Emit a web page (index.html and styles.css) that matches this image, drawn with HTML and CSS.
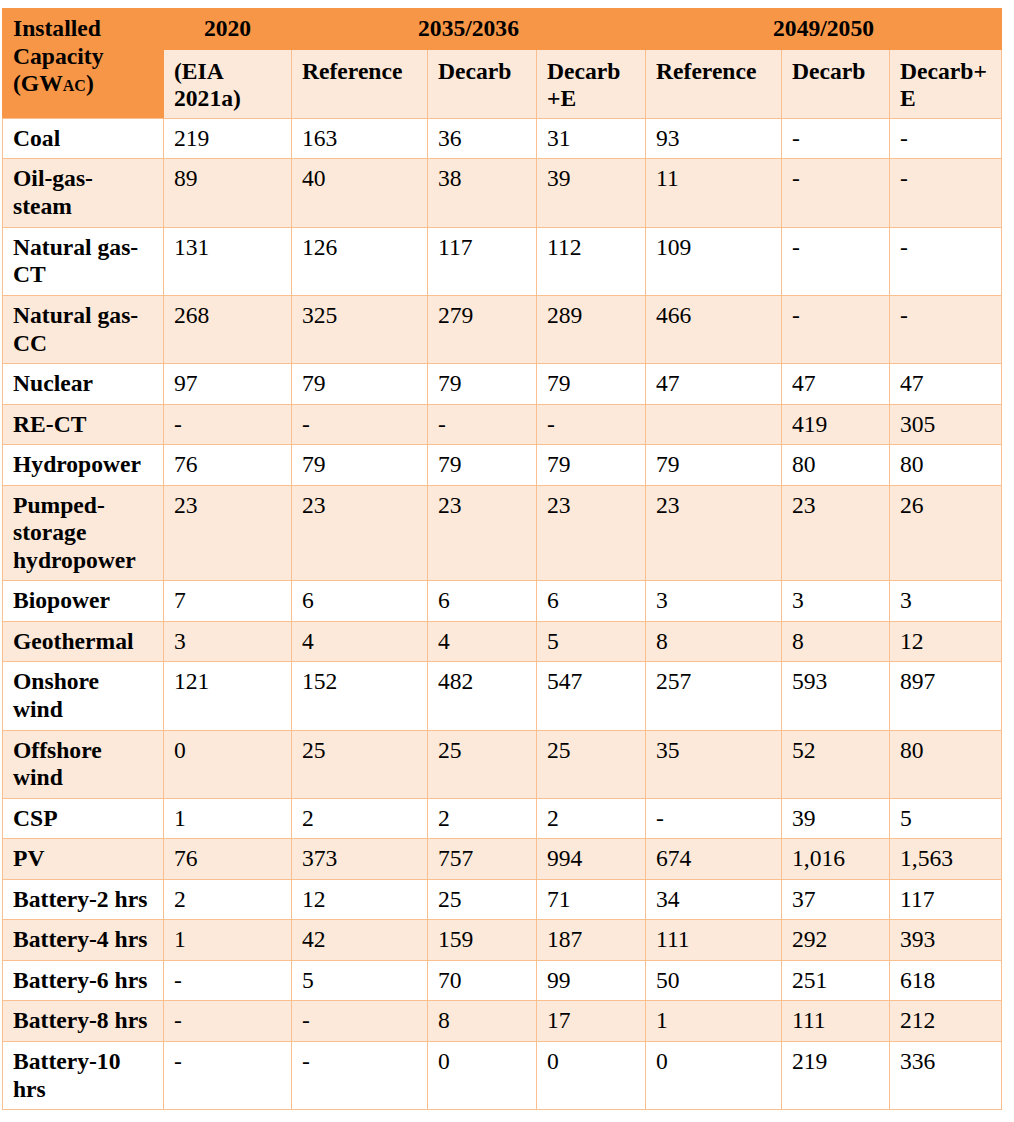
FILE: index.html
```html
<!DOCTYPE html>
<html lang="en">
<head>
<meta charset="utf-8">
<title>Installed Capacity</title>
<link rel="stylesheet" href="styles.css">
</head>
<body>
<div class="wrap">
<table class="cap">
  <colgroup>
    <col class="c0"><col class="c1"><col class="c2"><col class="c3"><col class="c4"><col class="c5"><col class="c6"><col class="c7">
  </colgroup>
  <thead>
    <tr class="h1">
      <th class="corner" rowspan="2">Installed<br>Capacity<br>(GW<span class="sub">AC</span>)</th>
      <th class="year">2020</th>
      <th class="year" colspan="3">2035/2036</th>
      <th class="year" colspan="3">2049/2050</th>
    </tr>
    <tr class="h2">
      <th>(EIA 2021a)</th>
      <th>Reference</th>
      <th>Decarb</th>
      <th>Decarb +E</th>
      <th>Reference</th>
      <th>Decarb</th>
      <th>Decarb+<br>E</th>
    </tr>
  </thead>
  <tbody>
    <tr><th>Coal</th><td>219</td><td>163</td><td>36</td><td>31</td><td>93</td><td>-</td><td>-</td></tr>
    <tr class="alt"><th>Oil-gas-<br>steam</th><td>89</td><td>40</td><td>38</td><td>39</td><td>11</td><td>-</td><td>-</td></tr>
    <tr><th>Natural gas-<br>CT</th><td>131</td><td>126</td><td>117</td><td>112</td><td>109</td><td>-</td><td>-</td></tr>
    <tr class="alt"><th>Natural gas-<br>CC</th><td>268</td><td>325</td><td>279</td><td>289</td><td>466</td><td>-</td><td>-</td></tr>
    <tr><th>Nuclear</th><td>97</td><td>79</td><td>79</td><td>79</td><td>47</td><td>47</td><td>47</td></tr>
    <tr class="alt"><th>RE-CT</th><td>-</td><td>-</td><td>-</td><td>-</td><td></td><td>419</td><td>305</td></tr>
    <tr><th>Hydropower</th><td>76</td><td>79</td><td>79</td><td>79</td><td>79</td><td>80</td><td>80</td></tr>
    <tr class="alt"><th>Pumped-<br>storage<br>hydropower</th><td>23</td><td>23</td><td>23</td><td>23</td><td>23</td><td>23</td><td>26</td></tr>
    <tr><th>Biopower</th><td>7</td><td>6</td><td>6</td><td>6</td><td>3</td><td>3</td><td>3</td></tr>
    <tr class="alt"><th>Geothermal</th><td>3</td><td>4</td><td>4</td><td>5</td><td>8</td><td>8</td><td>12</td></tr>
    <tr><th>Onshore<br>wind</th><td>121</td><td>152</td><td>482</td><td>547</td><td>257</td><td>593</td><td>897</td></tr>
    <tr class="alt"><th>Offshore<br>wind</th><td>0</td><td>25</td><td>25</td><td>25</td><td>35</td><td>52</td><td>80</td></tr>
    <tr><th>CSP</th><td>1</td><td>2</td><td>2</td><td>2</td><td>-</td><td>39</td><td>5</td></tr>
    <tr class="alt"><th>PV</th><td>76</td><td>373</td><td>757</td><td>994</td><td>674</td><td>1,016</td><td>1,563</td></tr>
    <tr><th>Battery-2 hrs</th><td>2</td><td>12</td><td>25</td><td>71</td><td>34</td><td>37</td><td>117</td></tr>
    <tr class="alt"><th>Battery-4 hrs</th><td>1</td><td>42</td><td>159</td><td>187</td><td>111</td><td>292</td><td>393</td></tr>
    <tr><th>Battery-6 hrs</th><td>-</td><td>5</td><td>70</td><td>99</td><td>50</td><td>251</td><td>618</td></tr>
    <tr class="alt"><th>Battery-8 hrs</th><td>-</td><td>-</td><td>8</td><td>17</td><td>1</td><td>111</td><td>212</td></tr>
    <tr><th>Battery-10<br>hrs</th><td>-</td><td>-</td><td>0</td><td>0</td><td>0</td><td>219</td><td>336</td></tr>
  </tbody>
</table>
</div>
</body>
</html>
```

FILE: styles.css
```css
html, body {
  margin: 0;
  padding: 0;
  background: #ffffff;
}

.wrap {
  padding: 8px 0 0 2px;
}

.cap {
  width: 999px;
  table-layout: fixed;
  border-collapse: collapse;
  font-family: "Liberation Serif", "Times New Roman", serif;
  font-size: 23.6px;
  line-height: 27.7px;
  color: #000000;
}

.c0 { width: 161px; }
.c1 { width: 128px; }
.c2 { width: 136px; }
.c3 { width: 109px; }
.c4 { width: 109px; }
.c5 { width: 136px; }
.c6 { width: 108px; }
.c7 { width: 112px; }

.cap th,
.cap td {
  border: 1px solid #fabf8f;
  padding: 6px 10px 5.8px 10px;
  vertical-align: top;
  text-align: left;
}

.cap th {
  font-weight: bold;
  white-space: nowrap;
}

.cap td {
  font-weight: normal;
}

.h1 th {
  background: #f79646;
  border-color: #f79646;
}

.h1 .year {
  text-align: center;
}

.cap .corner {
  background: #f79646;
  border-color: #f79646;
  border-bottom-color: #fabf8f;
}

.h2 th {
  background: #fde9d9;
  white-space: normal;
  padding-top: 8px;
  padding-bottom: 5px;
}

.sub {
  font-size: 16px;
}

.alt th,
.alt td {
  background: #fde9d9;
}
```
